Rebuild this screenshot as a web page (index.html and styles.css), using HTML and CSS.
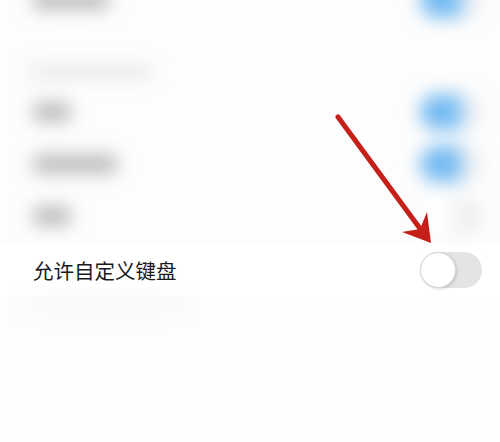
FILE: index.html
```html
<!DOCTYPE html>
<html lang="zh">
<head>
<meta charset="utf-8">
<link rel="stylesheet" href="styles.css">
</head>
<body>
<div class="page">
  <div class="blurred top-list">
    <div class="row first">
      <div class="label w75"></div>
      <div class="switch on"><span class="knob"></span></div>
    </div>
    <div class="header"><div class="header-bar"></div></div>
    <div class="row">
      <div class="label w35"></div>
      <div class="switch on"><span class="knob"></span></div>
    </div>
    <div class="row">
      <div class="label w82"></div>
      <div class="switch on"><span class="knob"></span></div>
    </div>
    <div class="row">
      <div class="label w35"></div>
      <div class="switch off-faint"><span class="knob"></span></div>
    </div>
  </div>
  <div class="row sharp">
    <span class="title">允许自定义键盘</span>
    <div class="switch off"><span class="knob"></span></div>
  </div>
  <div class="blurred bottom-list">
    <div class="faint-bar"></div>
  </div>
  <svg class="arrow" width="500" height="442" viewBox="0 0 500 442">
    <line x1="338" y1="117" x2="424" y2="234" stroke="#c41f18" stroke-width="5" stroke-linecap="round"/>
    <polygon points="431,243 402,232 420,229 427,212" fill="#c41f18"/>
  </svg>
</div>
</body>
</html>
```

FILE: styles.css
```css
html, body {
  margin: 0;
  padding: 0;
  background: #fff;
}
.page {
  position: relative;
  width: 500px;
  height: 442px;
  overflow: hidden;
  background: #fdfdfd;
  font-family: "Noto Sans CJK SC", "Noto Sans", sans-serif;
}
.blurred {
  filter: blur(9px);
}
.top-list {
  display: flex;
  flex-direction: column;
  height: 244px;
}
.row {
  display: flex;
  align-items: center;
  justify-content: space-between;
  height: 52px;
  padding: 0 18px 0 33px;
  flex-shrink: 0;
}
.row.first {
  margin-top: -26px;
}
.header {
  display: flex;
  align-items: flex-end;
  height: 60px;
  padding: 0 0 8px 30px;
  box-sizing: border-box;
  flex-shrink: 0;
}
.header-bar {
  width: 120px;
  height: 12px;
  background: #e6e6e6;
  border-radius: 4px;
}
.label {
  height: 18px;
  background: #b8b8b8;
  border-radius: 6px;
}
.w75 { width: 76px; }
.w35 { width: 38px; }
.w82 { width: 84px; }
.switch {
  position: relative;
  width: 62px;
  height: 36px;
  border-radius: 18px;
  box-sizing: border-box;
}
.knob {
  position: absolute;
  top: 1px;
  width: 34px;
  height: 34px;
  border-radius: 50%;
  background: #fff;
  box-sizing: border-box;
}
.switch.on {
  background: linear-gradient(90deg, #74baf1 0%, #74baf1 58%, #e9eef3 74%, #eef0f2 100%);
}
.switch.on .knob {
  display: none;
}
.switch.off-faint {
  background: #efefef;
}
.switch.off-faint .knob {
  left: 1px;
}
.sharp {
  background: #fff;
}
.title {
  font-size: 20.5px;
  color: #1a1a1a;
}
.switch.off {
  background: #e4e4e4;
}
.switch.off .knob {
  top: 0;
  left: 0;
  width: 36px;
  height: 36px;
  border: 1px solid #d6d6d6;
  box-shadow: 1px 1px 3px rgba(0, 0, 0, 0.15);
}
.bottom-list {
  padding: 4px 30px 0;
}
.faint-bar {
  width: 150px;
  height: 8px;
  background: #f2f2f2;
}
.arrow {
  position: absolute;
  left: 0;
  top: 0;
}
```
